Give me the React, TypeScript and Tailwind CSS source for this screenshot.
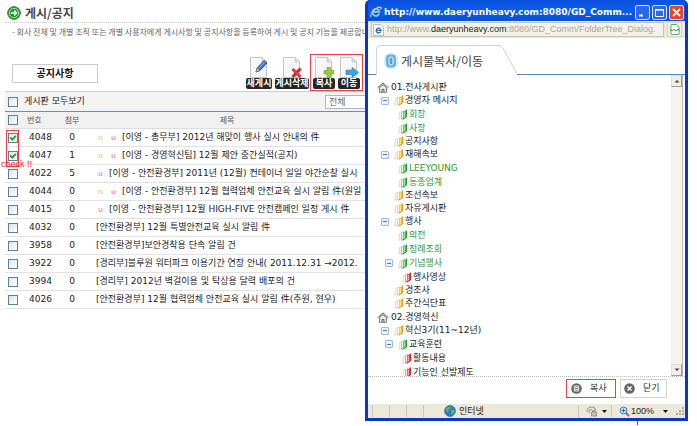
import React from 'react';
import clsx from 'clsx';

type Post = {
  no: number;
  files: number;
  isNew?: boolean;
  isUpdated?: boolean;
  title: string;
  checked?: boolean;
};

type TreeNode = {
  label: string;
  depth: 0 | 1 | 2 | 3;
  icon: 'home' | 'yellow' | 'green' | 'red';
  open?: boolean;
  green?: boolean;
};

const posts: Post[] = [
  { no: 4048, files: 0, isNew: true, isUpdated: true, checked: true, title: '[이영 - 총무부] 2012년 해맞이 행사 실시 안내의 件' },
  { no: 4047, files: 1, isNew: true, isUpdated: true, checked: true, title: '[이영 - 경영혁신팀] 12월 제안 중간실적(공지)' },
  { no: 4022, files: 5, isUpdated: true, title: '[이영 - 안전환경부] 2011년 (12월) 컨테이너 일일 야간순찰 실시' },
  { no: 4044, files: 0, isNew: true, isUpdated: true, title: '[이영 - 안전환경부] 12월 협력업체 안전교육 실시 알림 件(원일' },
  { no: 4015, files: 0, isUpdated: true, title: '[이영 - 안전환경부] 12월 HIGH-FIVE 안전캠페인 일정 게시 件' },
  { no: 4032, files: 0, title: '[안전환경부] 12월 특별안전교육 실시 알림 件' },
  { no: 3958, files: 0, title: '[안전환경부]보안경착용 단속 알림 건' },
  { no: 3922, files: 0, title: '[경리부]블루원 워터파크 이용기간 연장 안내( 2011.12.31 →2012.' },
  { no: 3994, files: 0, title: '[경리부] 2012년 벽걸이용 및 탁상용 달력 배포의 건' },
  { no: 4026, files: 0, title: '[안전환경부] 12월 협력업체 안전교육 실시 알림 件(주원, 현우)' },
];

const tree: TreeNode[] = [
  { label: '01.전사게시판', depth: 0, icon: 'home' },
  { label: '경영자 메시지', depth: 1, icon: 'yellow', open: true },
  { label: '회장', depth: 2, icon: 'green', green: true },
  { label: '사장', depth: 2, icon: 'green', green: true },
  { label: '공지사항', depth: 1, icon: 'yellow' },
  { label: '재해속보', depth: 1, icon: 'yellow', open: true },
  { label: 'LEEYOUNG', depth: 2, icon: 'green', green: true },
  { label: '동종업계', depth: 2, icon: 'green', green: true },
  { label: '조선속보', depth: 1, icon: 'yellow' },
  { label: '자유게시판', depth: 1, icon: 'yellow' },
  { label: '행사', depth: 1, icon: 'yellow', open: true },
  { label: '의전', depth: 2, icon: 'green', green: true },
  { label: '정례조회', depth: 2, icon: 'green', green: true },
  { label: '기념행사', depth: 2, icon: 'green', open: true, green: true },
  { label: '행사영상', depth: 3, icon: 'red' },
  { label: '경조사', depth: 1, icon: 'yellow' },
  { label: '주간식단표', depth: 1, icon: 'yellow' },
  { label: '02.경영혁신', depth: 0, icon: 'home' },
  { label: '혁신3기(11~12년)', depth: 1, icon: 'yellow', open: true },
  { label: '교육훈련', depth: 2, icon: 'green', open: true },
  { label: '활동내용', depth: 3, icon: 'red' },
  { label: '기능인 선발제도', depth: 3, icon: 'red' },
];

const rowByDepth = {
  0: 'h-[14px]',
  1: 'h-[13px] pl-[4px]',
  2: 'h-[14px] pl-[8px]',
  3: 'h-[14px] pl-[12px]',
};

// light face, mid face, dark edge
const folderColors = {
  yellow: ['#fde9a0', '#f6bd2c', '#cf8a12'],
  green: ['#b4ecb0', '#3cc343', '#17862a'],
  red: ['#fbb9bd', '#ec3f4b', '#b5101e'],
};

function CheckBox({ label, checked }: { label: string; checked?: boolean }) {
  return (
    <span className="grid w-[10px] h-[10px]">
      <input
        type="checkbox"
        aria-label={label}
        defaultChecked={checked}
        className="peer col-start-1 row-start-1 appearance-none w-[10px] h-[10px] border border-[#5f7f9f] bg-gradient-to-br from-[#dfe3e4] to-white"
      />
      <svg viewBox="0 0 10 10" className="col-start-1 row-start-1 hidden peer-checked:block pointer-events-none">
        <path d="M2.3 4.3 L4.3 6.6 L7.8 2.8" fill="none" stroke="#21a121" strokeWidth="1.8" />
      </svg>
    </span>
  );
}

function PageIcon({ children }: { children: React.ReactNode }) {
  return (
    <svg viewBox="0 0 20 21" className="w-[20px] h-[21px]">
      <path d="M1.5 .5H13L17.5 5V20.5H1.5Z" fill="#f7f7f7" stroke="#c6c6c6" />
      <path d="M13 .5V5H17.5Z" fill="#dcdcdc" stroke="#c6c6c6" strokeWidth=".7" />
      {children}
    </svg>
  );
}

function ToolButton({ label, width, children }: { label: string; width: string; children: React.ReactNode }) {
  return (
    <button className="flex flex-col items-center">
      <PageIcon>{children}</PageIcon>
      <span className={clsx('flex items-center justify-center h-[11px] rounded-[2px] bg-[#262626] text-white text-[9px] leading-[11px] font-bold whitespace-nowrap', width)}>
        {label}
      </span>
    </button>
  );
}

function TreeIcon({ icon }: { icon: TreeNode['icon'] }) {
  if (icon === 'home') {
    return (
      <svg viewBox="0 0 12 11" className="w-[12px] h-[11px] shrink-0">
        <path d="M2.5 5.5V10.4H9.5V5.5L6 2.5Z" fill="#f2f2f2" stroke="#666" strokeWidth=".8" />
        <path d="M.5 5.8 L6 .9 L11.5 5.8" fill="none" stroke="#555" strokeWidth=".9" />
        <path d="M1.5 6.8 L6 2.9 L10.5 6.8" fill="none" stroke="#888" strokeWidth=".7" />
        <path d="M5 10.2V7.4H7V10.2M3.6 7.6H4M8 7.6H8.4" fill="#ccc" stroke="#444" strokeWidth=".8" />
      </svg>
    );
  }
  const [light, mid, dark] = folderColors[icon];
  return (
    <svg viewBox="0 0 10 11" className="w-[10px] h-[11px] shrink-0">
      <path d="M1.4 3.6 L3.6 2.4V8.6L.8 10.3Z" fill="#f7f7f7" stroke="#c8c8c8" strokeWidth=".6" />
      <path d="M3.8 2.8 L5.6 1.6V9L3.4 10.3Z" fill="#fff" stroke={mid} strokeWidth=".5" />
      <path d="M5.2 2.4 L8.8 .4V7.8L4.6 10.6Z" fill={mid} />
      <path d="M5.8 3 L6.8 2.4V8.4L5.5 9.2Z" fill={light} />
      <path d="M8.6 .6V7.8L4.8 10.3" fill="none" stroke={dark} strokeWidth=".8" />
    </svg>
  );
}

function TreeRow({ node }: { node: TreeNode }) {
  return (
    <li className={clsx('flex items-center whitespace-nowrap', rowByDepth[node.depth], node.green ? 'text-[#2c9a35]' : 'text-[#222]')}>
      {node.depth > 0 && (
        <span className="w-[8px] mr-[5px] shrink-0">
          {node.open && (
            <button aria-label={`${node.label} 접기`} className="flex items-center justify-center w-[8px] h-[8px] rounded-[1px] border border-[#9dbbe0] bg-[#eaf2fc]">
              <span className="w-[4px] h-px bg-[#4a78b5]" />
            </button>
          )}
        </span>
      )}
      <TreeIcon icon={node.icon} />
      <span className={node.depth === 0 ? 'ml-[2px]' : 'ml-px'}>{node.label}</span>
    </li>
  );
}

function IeLogo() {
  return (
    <svg viewBox="0 0 12 12" className="w-[12px] h-[12px] shrink-0">
      <path d="M9.2 7.6 A3.5 3.5 0 1 1 9.4 5.9 H3.2" fill="none" stroke="#7fd0ff" strokeWidth="1.8" />
      <path d="M1 11 C-.6 8 6 .5 11 1.2 C11.6 1.6 11 2.8 10.5 3.4" fill="none" stroke="#f0cf4a" strokeWidth="1.1" />
    </svg>
  );
}

function BoardPage() {
  return (
    <main className="flex-1 min-w-0 overflow-hidden pl-[5px]">
      <header className="flex items-center gap-[4px] h-[23px] pl-[2px] pt-[3px] border-b border-dotted border-[#ccc]">
        <svg viewBox="0 0 14 14" className="w-[14px] h-[14px]">
          <circle cx="7" cy="7" r="6.3" fill="#35a435" stroke="#1b7a22" />
          <circle cx="7" cy="7" r="4.6" fill="#1f8f2a" stroke="#b8e6b4" strokeWidth=".9" />
          <path d="M3.8 7H9.6M7.2 4.4L9.8 7L7.2 9.6" fill="none" stroke="#fff" strokeWidth="1.4" />
        </svg>
        <h1 className="text-[12px] leading-[14px] font-bold text-[#4a4a4a] font-['Noto_Sans_CJK_KR',sans-serif]">게시/공지</h1>
      </header>
      <p className="pl-[7px] pt-[2px] text-[8px] leading-[14px] text-[#666] whitespace-nowrap font-['Noto_Sans_CJK_KR',sans-serif]">
        - 회사 전체 및 개별 조직 또는 개별 사용자에게 게시사항 및 공지사항을 등록하여 게시 및 공지 기능을 제공합니
      </p>

      <div className="flex justify-between items-end pl-[7px] pr-[2px] pt-[15px]">
        <button className="w-[86px] h-[19px] mb-[8px] border border-[#ccc] bg-white text-[10px] leading-[14px] font-bold text-[#111]">공지사항</button>
        <div className="flex items-end">
          <div className="flex gap-[3px] mr-px pb-[2px]">
            <ToolButton label="새게시" width="w-[26px]">
              <path d="M7 15 L8.2 11 L15 3.5 L18 6 L11 13.5Z" fill="#3d6fc0" stroke="#234a8c" strokeWidth=".8" />
              <path d="M7 15 L8.2 11 L11 13.5Z" fill="#e8c98a" stroke="#555" strokeWidth=".5" />
              <path d="M9.5 11.5 L16 4.5" stroke="#9cc3f2" />
            </ToolButton>
            <ToolButton label="게시삭제" width="w-[34px]">
              <path d="M10.5 12 L18.5 20 M18.5 11.5 L10.5 20" stroke="#d8252b" strokeWidth="3" />
              <path d="M10.8 12.2 L17.8 19.3" stroke="#f0666a" />
            </ToolButton>
          </div>
          <div className="flex gap-[3px] h-[37px] pt-[2px] px-[2px] border border-[#e8404a]">
            <ToolButton label="복사" width="w-[22px]">
              <path d="M13 10.5H16.5V13.5H19.5V17H16.5V20.5H13V17H10V13.5H13Z" fill="#9acb3c" stroke="#74a522" strokeWidth=".7" />
            </ToolButton>
            <ToolButton label="이동" width="w-[22px]">
              <path d="M7 13.2H13V10.5L19.5 15.5L13 20.5V17.6H7Z" fill="#38a5dc" stroke="#1e84bd" strokeWidth=".7" />
            </ToolButton>
          </div>
        </div>
      </div>

      <div className="flex items-center justify-between h-[20px] pl-[3px] border-t border-[#ccc] bg-[#f3f3f3]">
        <label className="flex items-center gap-[6px] text-[9px] leading-[13px] text-[#222]">
          <CheckBox label="게시판 모두보기" />
          게시판 모두보기
        </label>
        <select aria-label="검색 구분" className="appearance-none w-[40px] h-[14px] pl-[3px] border border-r-0 border-[#a9b7c6] bg-white text-[9px] leading-[12px] text-[#666]">
          <option>전체</option>
        </select>
      </div>

      <div className="relative border-t border-[#5b93c6]">
        <table className="w-full table-fixed border-separate border-spacing-0 text-[9px] leading-[13px] text-[#222]">
          <thead>
            <tr className="bg-[#f1f1f1] text-[8px] text-[#555]">
              <th className="w-[18px] h-[17px] p-0 pl-[3px] border-b border-[#ddd]"><CheckBox label="전체 선택" /></th>
              <th className="w-[32px] p-0 pl-[4px] border-b border-[#ddd] font-normal text-left">번호</th>
              <th className="w-[34px] p-0 border-b border-[#ddd] font-normal">첨부</th>
              <th className="p-0 border-b border-[#ddd] font-normal">제목</th>
            </tr>
          </thead>
          <tbody>
            {posts.map((post) => (
              <tr key={post.no}>
                <td className="h-[18px] p-0 pl-[3px] border-b border-[#e2e2e2]"><CheckBox label={`${post.no} 선택`} checked={post.checked} /></td>
                <td className="p-0 pl-[6px] border-b border-[#e2e2e2]">{post.no}</td>
                <td className="p-0 border-b border-[#e2e2e2] text-center">{post.files}</td>
                <td className="p-0 pl-[7px] border-b border-[#e2e2e2] whitespace-nowrap overflow-hidden">
                  {post.isNew && <span className="inline-block w-[13px] pl-[2px] text-[7px] font-bold text-[#f9cf9c]">n</span>}
                  {post.isUpdated && <span className="inline-block w-[13px] pl-[2px] text-[7px] font-bold text-[#f5a3c0]">u</span>}
                  {post.title}
                </td>
              </tr>
            ))}
          </tbody>
        </table>
        <div className="absolute left-px top-[18px] w-[13px] h-[37px] border border-[#e8404a] pointer-events-none" />
        <span className="absolute -left-[4px] top-[46px] text-[9px] leading-[12px] text-[#f0202a] whitespace-nowrap font-['Liberation_Sans',sans-serif]">check !!</span>
      </div>
    </main>
  );
}

function TitleButton({ label, danger, children }: { label: string; danger?: boolean; children: React.ReactNode }) {
  return (
    <button aria-label={label} className={clsx('w-[15px] h-[15px] rounded-[2px] border border-[#dfe8fb]', danger ? 'bg-[#dd4a26]' : 'bg-[#2f66e4]')}>
      <svg viewBox="0 0 13 13" className="w-[13px] h-[13px]" fill="none" stroke="#fff">
        {children}
      </svg>
    </button>
  );
}

function Divider() {
  return <span className="w-px h-[12px] bg-[#cdc9b6]" />;
}

function CopyMoveWindow() {
  return (
    <section className="rounded-t-[5px] border-x-[3px] border-b-[3px] border-[#0b35cf] bg-[#0b35cf]">
      <div className="flex items-center h-[21px] pl-[2px] pt-[3px] rounded-t-[4px] bg-gradient-to-b from-[#0a50dc] via-[#0a5cf0] to-[#0450d8]">
        <IeLogo />
        <h2 className="flex-1 min-w-0 ml-[2px] text-[9px] leading-[14px] font-bold text-white whitespace-nowrap font-['DejaVu_Sans',sans-serif]">
          http://www.daeryunheavy.com:8080/GD_Comm...
        </h2>
        <div className="flex gap-[2px] pr-px">
          <TitleButton label="최소화"><path d="M3 9.5H7" strokeWidth="2" /></TitleButton>
          <TitleButton label="최대화"><path d="M2.5 3.5H10.5V10.5H2.5ZM2.5 4.2H10.5" /></TitleButton>
          <TitleButton label="닫기" danger><path d="M3 3L10 10M10 3L3 10" strokeWidth="1.8" /></TitleButton>
        </div>
      </div>

      <div className="flex items-center gap-[3px] h-[17px] px-[3px] bg-[#ece9d8]">
        <div className="flex flex-1 min-w-0 items-center gap-[3px] h-[15px] pl-px border border-[#c9c5b2] bg-[#f4f2e8]">
          <svg viewBox="0 0 11 12" className="w-[11px] h-[12px] shrink-0">
            <path d="M.5 .5H8L10.5 3V11.5H.5Z" fill="#fff" stroke="#bbb" />
            <path d="M7.8 7.6A2.4 2.4 0 1 1 8 6.3H3.5" fill="none" stroke="#2470b8" strokeWidth="1.3" />
          </svg>
          <p className="text-[9px] leading-[13px] text-[#aaa69a] whitespace-nowrap font-['Liberation_Sans',sans-serif]">
            http://www.<span className="text-[#222]">daeryunheavy.com</span>:8080/GD_Comm/FolderTree_Dialog.
          </p>
        </div>
        <button aria-label="호환성 보기" className="flex items-center justify-center w-[15px] h-[15px] border border-[#d8d4c2] bg-[#f4f2e8]">
          <svg viewBox="0 0 10 11" className="w-[10px] h-[11px]">
            <path d="M1 .5H6.5L9 3V10.5H1Z" fill="#fff" stroke="#5fae6c" />
            <path d="M0 5L2 7L4 5L6 7L8 5L10 6.5" fill="none" stroke="#3c9c50" />
          </svg>
        </button>
      </div>

      <div className="bg-white pt-[7px]">
        <div className="flex h-[30px]">
          <span className="w-[8px] border-b border-[#5c86b4]" />
          <div className="flex items-center gap-[2px] w-[121px] pl-[6px] border-l border-t border-[#ccd3da] rounded-tl-[5px]">
            <svg viewBox="0 0 16 18" className="w-[16px] h-[18px]">
              <rect x="1" y="1" width="14" height="16" rx="6" fill="#d6ecfa" />
              <rect x="3" y="2.5" width="10" height="13" rx="4" fill="#69b3e2" />
              <rect x="6" y="5" width="4" height="8" rx="2" fill="#5a9fd0" stroke="#e6f5ff" />
            </svg>
            <h3 className="text-[12px] leading-[16px] text-[#444] whitespace-nowrap font-['Noto_Sans_CJK_KR',sans-serif]">게시물복사/이동</h3>
          </div>
          <svg viewBox="0 0 20 30" className="w-[20px] h-[30px]">
            <path d="M0 .5C4 .5 5 2 7 5L19 27Q19.5 29.5 20 29.5" fill="none" stroke="#ccd3da" />
          </svg>
          <span className="flex-1 border-b border-[#5c86b4]" />
        </div>

        <div className="flex h-[301px]">
          <ul className="flex-1 min-w-0 pl-[9px] pt-[5px] overflow-hidden text-[9px] leading-[13px]">
            {tree.map((node) => (
              <TreeRow key={node.label} node={node} />
            ))}
          </ul>
          <div className="flex flex-col w-[12px] mr-[2px] border-r border-[#b8b6ac] bg-[#f4f3ef]">
            <button aria-label="위로" className="flex items-center justify-center h-[12px] border border-l-[#ddd] border-t-[#ddd] border-[#a09e94] bg-[#f1efe6]">
              <svg viewBox="0 0 6 4" className="w-[6px] h-[4px]"><path d="M.5 3.5L3 1L5.5 3.5Z" fill="#444" /></svg>
            </button>
            <span className="flex-1" />
            <button aria-label="아래로" className="flex items-center justify-center h-[12px] border border-l-[#ddd] border-t-[#ddd] border-[#a09e94] bg-[#f1efe6]">
              <svg viewBox="0 0 6 4" className="w-[6px] h-[4px]"><path d="M.5 .5L3 3L5.5 .5Z" fill="#444" /></svg>
            </button>
          </div>
        </div>

        <div className="flex items-start justify-end gap-[4px] h-[28px] pt-[2px] pr-[18px] border-t border-dotted border-[#bbb] text-[9px] leading-[13px] text-[#333]">
          <button className="flex items-center gap-[8px] h-[19px] w-[50px] pl-[4px] border border-[#e8404a]">
            <svg viewBox="0 0 11 11" className="w-[11px] h-[11px] shrink-0">
              <circle cx="5.5" cy="5.5" r="5.3" fill="#666" />
              <path d="M3.3 3H7.7V8H3.3ZM4 4.7H7M4 6.3H7" fill="none" stroke="#fff" strokeWidth=".9" />
            </svg>
            복사
          </button>
          <button className="flex items-center gap-[8px] h-[19px] w-[47px] pl-[3px] border border-[#d4d4d4]">
            <svg viewBox="0 0 11 11" className="w-[11px] h-[11px] shrink-0">
              <circle cx="5.5" cy="5.5" r="5.3" fill="#666" />
              <path d="M3.5 3.5L7.5 7.5M7.5 3.5L3.5 7.5" stroke="#fff" strokeWidth="1.5" />
            </svg>
            닫기
          </button>
        </div>
      </div>

      <footer className="flex items-center h-[14px] pl-[4px] bg-[#ece9d8] text-[9px] leading-[13px] text-[#222]">
        <div className="flex gap-[16px]">
          <Divider />
          <Divider />
          <Divider />
          <Divider />
        </div>
        <svg viewBox="0 0 12 12" className="w-[12px] h-[12px] ml-[20px] mr-[3px]">
          <circle cx="6" cy="6" r="5.4" fill="#2f7fc4" stroke="#1d5590" strokeWidth=".7" />
          <path d="M2 3.5Q4 1 7 1.5Q6 4 4.5 4.5Q5 6.5 3 7Q1.5 5.5 2 3.5ZM7 5.5Q9.5 4 10.8 6Q10 9 7.8 10Q7.5 7.5 7 5.5Z" fill="#63b95c" />
        </svg>
        인터넷
        <div className="flex flex-1 items-center justify-end">
          <Divider />
          <svg viewBox="0 0 12 12" className="w-[12px] h-[12px] ml-[7px]">
            <path d="M1 7Q1 2 6 2Q9 2 9.5 5M3 8Q3 4.5 6 4.5" fill="none" stroke="#9a9a94" strokeWidth="1.2" />
            <path d="M5.5 7H10.5V11H5.5ZM6.7 7V5.6H9.3V7" fill="#c8c6ba" stroke="#777" strokeWidth=".7" />
          </svg>
          <svg viewBox="0 0 5 3" className="w-[5px] h-[3px] ml-[4px] mr-[4px]"><path d="M0 0H5L2.5 3Z" fill="#111" /></svg>
          <Divider />
          <svg viewBox="0 0 11 11" className="w-[11px] h-[11px] ml-[7px]">
            <path d="M6.5 6.5L10 10" stroke="#a0642c" strokeWidth="1.8" />
            <circle cx="4.5" cy="4.5" r="3.4" fill="#cfe6fb" stroke="#3a78c8" />
            <path d="M4.5 2.7V6.3M2.7 4.5H6.3" stroke="#2465b8" />
          </svg>
          <span className="ml-px font-['Liberation_Sans',sans-serif]">100%</span>
          <svg viewBox="0 0 5 3" className="w-[5px] h-[3px] ml-[9px] mr-[8px]"><path d="M0 0H5L2.5 3Z" fill="#111" /></svg>
          <svg viewBox="0 0 8 8" className="w-[8px] h-[8px] mr-px" fill="#b4b09c">
            <path d="M6 0H8V2H6ZM3 3H5V5H3ZM6 3H8V5H6ZM0 6H2V8H0ZM3 6H5V8H3ZM6 6H8V8H6Z" />
          </svg>
        </div>
      </footer>
    </section>
  );
}

export default function App() {
  return (
    <div className="flex items-start pr-[9px] bg-white font-['DejaVu_Sans','Noto_Sans_CJK_KR',sans-serif]">
      <BoardPage />
      <div className="shrink-0 w-[323px]">
        <CopyMoveWindow />
        <div className="w-px h-[4px] ml-[272px] bg-[#2f6b4a]" />
      </div>
    </div>
  );
}
